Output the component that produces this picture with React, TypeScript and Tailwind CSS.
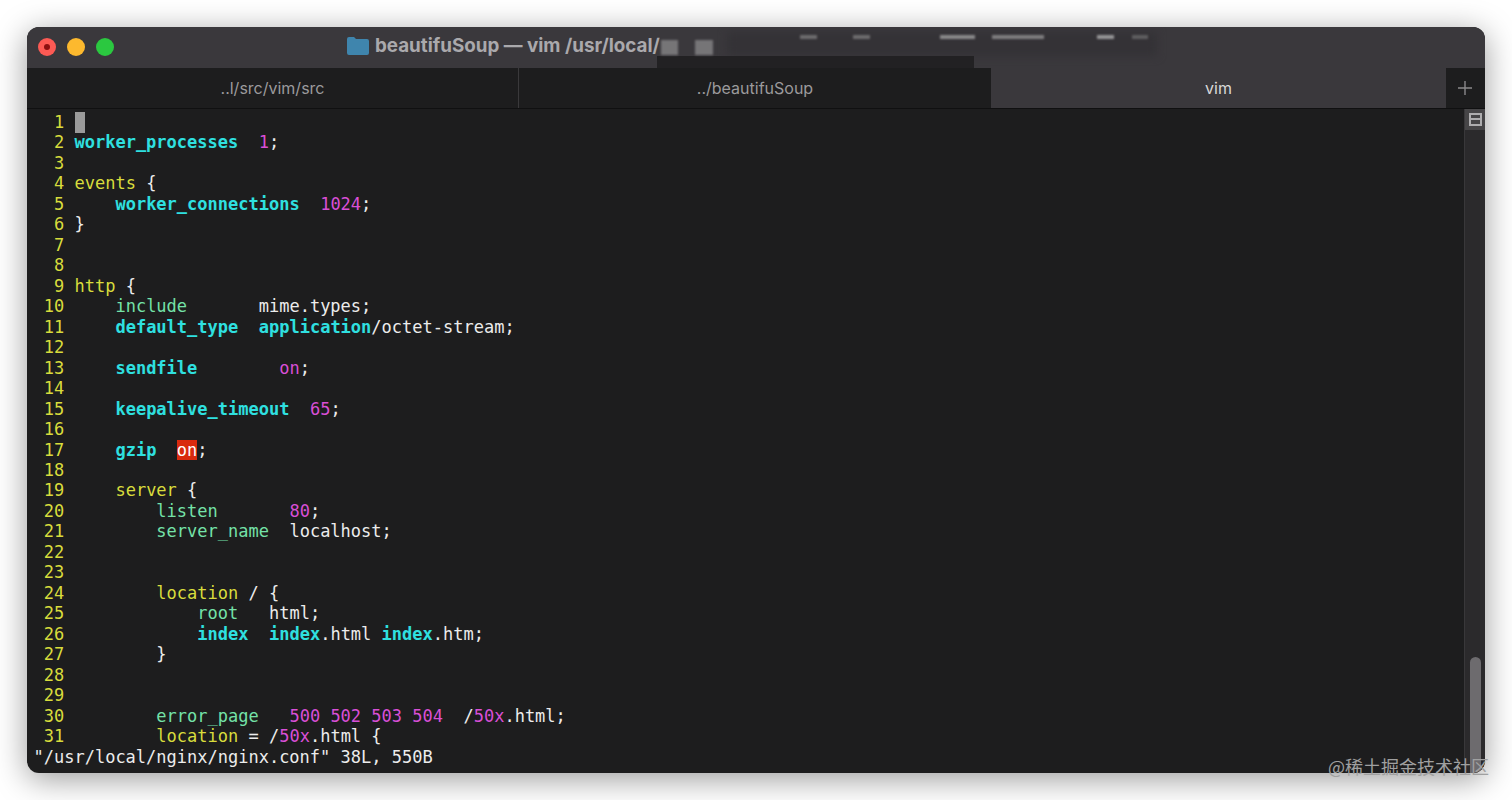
import React from 'react';

type Tok = [string, string?];

const KW = 'font-bold text-[#2fe0e0]';
const NUM = 'text-[#d94fd6]';
const GRN = 'text-[#74e2a8]';
const YEL = 'text-[#d8dc3c]';
const RED = 'bg-[#d92a0e] text-white';

const lines: Tok[][] = [
  [],
  [['worker_processes', KW], ['  '], ['1', NUM], [';']],
  [],
  [['events', YEL], [' {']],
  [['    '], ['worker_connections', KW], ['  '], ['1024', NUM], [';']],
  [['}']],
  [],
  [],
  [['http', YEL], [' {']],
  [['    '], ['include', GRN], ['       mime.types;']],
  [['    '], ['default_type', KW], ['  '], ['application', KW], ['/octet-stream;']],
  [],
  [['    '], ['sendfile', KW], ['        '], ['on', NUM], [';']],
  [],
  [['    '], ['keepalive_timeout', KW], ['  '], ['65', NUM], [';']],
  [],
  [['    '], ['gzip', KW], ['  '], ['on', RED], [';']],
  [],
  [['    '], ['server', YEL], [' {']],
  [['        '], ['listen', GRN], ['       '], ['80', NUM], [';']],
  [['        '], ['server_name', GRN], ['  localhost;']],
  [],
  [],
  [['        '], ['location', YEL], [' / {']],
  [['            '], ['root', GRN], ['   html;']],
  [['            '], ['index', KW], ['  '], ['index', KW], ['.html '], ['index', KW], ['.htm;']],
  [['        }']],
  [],
  [],
  [['        '], ['error_page', GRN], ['   '], ['500 502 503 504', NUM], ['  /'], ['50x', NUM], ['.html;']],
  [['        '], ['location', YEL], [' = /'], ['50x', NUM], ['.html {']],
];

const Tab = ({ label, className }: { label: string; className: string }) => (
  <div className={`flex items-center justify-center text-[16px] ${className}`}>{label}</div>
);

export default function App() {
  return (
    <div className="h-[800px] w-[1512px] overflow-hidden bg-white pl-[27px] pt-[27px]">
      <div className="relative flex h-[746px] w-[1458px] flex-col overflow-hidden rounded-xl bg-[#1d1d1e] font-['Inter','Liberation_Sans',sans-serif] shadow-[0_6px_32px_rgba(0,0,0,0.4)]">
        {/* title bar */}
        <div className="relative flex h-[41px] shrink-0 items-center bg-[#3a383c] pb-[1px] pl-[11px]">
          <div className="flex gap-[11px]">
            <div className="flex h-[18px] w-[18px] items-center justify-center rounded-full bg-[#fc5a54]">
              <div className="h-[6px] w-[6px] rounded-full bg-[#8c1010]" />
            </div>
            <div className="h-[18px] w-[18px] rounded-full bg-[#fdb92e]" />
            <div className="h-[18px] w-[18px] rounded-full bg-[#2bc840]" />
          </div>
          <svg className="ml-[233px] mb-[2px]" width="22" height="18" viewBox="0 0 22 18">
            <path d="M0 2a2 2 0 0 1 2-2h5l2 2h11a2 2 0 0 1 2 2v12a2 2 0 0 1-2 2H2a2 2 0 0 1-2-2z" fill="#3f85ad" />
          </svg>
          <span className="mb-[2px] ml-[6px] text-[18.8px] font-bold whitespace-nowrap text-[#aaa9ac]">beautifuSoup — vim /usr/local/</span>
        </div>

        {/* tabs */}
        <div className="flex h-[41px] shrink-0 border-b border-[#101011] text-[#9b9a9c]">
          <Tab label="..l/src/vim/src" className="w-[492px] border-r border-[#3a393b] bg-[#1d1d1e]" />
          <Tab label="../beautifuSoup" className="w-[472px] bg-[#1d1d1e]" />
          <Tab label="vim" className="w-[455px] bg-[#3a383c] text-[#d8d8d8]" />
          <div className="flex flex-1 items-center justify-center bg-[#1d1d1e] pr-[2px] text-[#8a898b]">
            <svg width="16" height="16" viewBox="0 0 16 16" stroke="currentColor" strokeWidth="1.4">
              <path d="M8 1v14M1 8h14" />
            </svg>
          </div>
        </div>

        {/* terminal */}
        <div className="flex min-h-0 flex-1">
          <div className="min-w-0 flex-1 pl-[6.5px] pt-[3px] font-['DejaVu_Sans_Mono',monospace] text-[17px] leading-[20.47px] whitespace-pre text-[#ececec]">
            {lines.map((toks, i) => (
              <div key={i} className="h-[20.47px]">
                <span className="text-[#d8dc3c]">{String(i + 1).padStart(3, ' ')} </span>
                {i === 0 && <span className="ml-[0.5px] inline-block h-[21px] w-[10px] bg-[#9a9a9a] align-top" />}
                {toks.map(([text, cls], j) => (
                  <span key={j} className={cls}>{text}</span>
                ))}
              </div>
            ))}
            <div className="h-[20.47px]">"/usr/local/nginx/nginx.conf" 38L, 550B</div>
          </div>

          {/* scrollbar */}
          <div className="flex w-[21px] shrink-0 flex-col justify-between border-l border-[#39383a] bg-[#2b2a2c]">
            <div className="flex h-[21px] items-center justify-center bg-[#464547]">
              <div className="flex h-[13px] w-[13px] flex-col border-2 border-[#aeadaf]">
                <div className="mt-[2.5px] h-[2px] bg-[#aeadaf]" />
              </div>
            </div>
            <div className="mx-auto h-[116px] w-[11px] rounded-t-full bg-[#6d6b6e]" />
          </div>
        </div>

        {/* blurred part of the title */}
        <div className="absolute top-[5px] left-[700px] h-[24px] w-[430px] bg-[#343236] blur-[4px]" />
        <div className="absolute top-[29px] left-[630px] h-[12px] w-[317px] bg-[#222123]" />
        <div className="absolute top-[13px] left-[634px] h-[15px] w-[17px] bg-[#767577] blur-[0.8px]" />
        <div className="absolute top-[13px] left-[668px] h-[15px] w-[18px] bg-[#767577] blur-[0.8px]" />
        <div className="absolute top-[8px] left-[773px] h-[4px] w-[17px] bg-[#6d6c6e] blur-[0.8px]" />
        <div className="absolute top-[8px] left-[826px] h-[4px] w-[17px] bg-[#6d6c6e] blur-[0.8px]" />
        <div className="absolute top-[8px] left-[913px] h-[4px] w-[35px] bg-[#8a898b] blur-[0.8px]" />
        <div className="absolute top-[8px] left-[965px] h-[4px] w-[52px] bg-[#7f7e80] blur-[0.8px]" />
        <div className="absolute top-[8px] left-[1070px] h-[4px] w-[17px] bg-[#969597] blur-[0.8px]" />
        <div className="absolute top-[8px] left-[1105px] h-[4px] w-[16px] bg-[#5f5e60] blur-[0.8px]" />
      </div>

      {/* watermark */}
      <div className="absolute top-[754px] left-[1328px] font-['Noto_Sans_CJK_SC',sans-serif] text-[18px] leading-[24px] whitespace-nowrap text-[#a0a0a0]">
        @稀土掘金技术社区
      </div>
    </div>
  );
}
